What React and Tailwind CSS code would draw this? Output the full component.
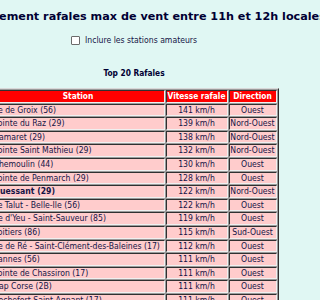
import React from "react";

const rows = [
  ["Île de Groix (56)", "141 km/h", "Ouest"],
  ["Pointe du Raz (29)", "139 km/h", "Nord-Ouest"],
  ["Camaret (29)", "138 km/h", "Nord-Ouest"],
  ["Pointe Saint Mathieu (29)", "132 km/h", "Nord-Ouest"],
  ["Chemoulin (44)", "130 km/h", "Ouest"],
  ["Pointe de Penmarch (29)", "128 km/h", "Ouest"],
  ["Ouessant (29)", "122 km/h", "Nord-Ouest", true],
  ["Le Talut - Belle-Ile (56)", "122 km/h", "Ouest"],
  ["Île d'Yeu - Saint-Sauveur (85)", "119 km/h", "Ouest"],
  ["Poitiers (86)", "115 km/h", "Sud-Ouest"],
  ["Île de Ré - Saint-Clément-des-Baleines (17)", "112 km/h", "Ouest"],
  ["Vannes (56)", "111 km/h", "Ouest"],
  ["Pointe de Chassiron (17)", "111 km/h", "Ouest"],
  ["Cap Corse (2B)", "111 km/h", "Ouest"],
  ["Rochefort Saint-Agnant (17)", "111 km/h", "Ouest"],
  ["Saint-Nazaire (44)", "108 km/h", "Ouest"],
  ["Belle-Ile (56)", "107 km/h", "Ouest"],
  ["Lorient (56)", "106 km/h", "Ouest"],
  ["Brest (29)", "105 km/h", "Nord-Ouest"],
  ["La Rochelle (17)", "104 km/h", "Ouest"],
];

const cond = { fontFamily: '"DejaVu Sans Condensed", "DejaVu Sans", Verdana, sans-serif' };
const wide = { fontFamily: '"DejaVu Sans", Verdana, sans-serif' };

const cell =
  "whitespace-nowrap border border-t-[#303030] border-l-[#303030] border-r-[#f0f0f0] border-b-[#f0f0f0] bg-[#ffcccc] py-0 leading-[10.6px]";
const head =
  "whitespace-nowrap border border-t-[#303030] border-l-[#303030] border-r-[#f0f0f0] border-b-[#f0f0f0] bg-[#ff0000] p-0 text-center text-[8.3px] font-bold leading-[10.6px] text-white";

export default function App() {
  return (
    <div className="min-h-[300px] w-full overflow-hidden bg-[#e0f7f3] text-[#141446]" style={cond}>
      <div className="flex w-[268px] flex-col items-center">
        <h1
          className="mt-[10px] whitespace-nowrap pl-[24px] text-[11.2px] font-bold leading-[13px] text-[#000033]"
          style={wide}
        >
          Classement rafales max de vent entre 11h et 12h locales
        </h1>
        <label className="mt-[13px] flex items-center gap-[5px] whitespace-nowrap text-[8.6px] leading-[9px]">
          <span className="inline-block h-[9px] w-[9px] rounded-[1px] border border-[#6b6b6b] bg-white" />
          <span>Inclure les stations amateurs</span>
        </label>
        <div className="mt-[24px] whitespace-nowrap text-[8.3px] font-bold leading-[9px] text-[#000033]">
          Top 20 Rafales
        </div>
        <table className="mt-[10px] w-[289px] shrink-0 table-fixed border-separate border-spacing-[1px] border border-t-[#d8d8d8] border-l-[#d8d8d8] border-r-[#303030] border-b-[#303030] bg-[#9a9a9a] text-[8.6px]">
          <thead>
            <tr>
              <th className={`w-[173px] ${head}`}>Station</th>
              <th className={`w-[62px] ${head}`}>Vitesse rafale</th>
              <th className={`w-[48px] ${head}`}>Direction</th>
            </tr>
          </thead>
          <tbody>
            {rows.map((r) => (
              <tr key={r[0]}>
                <td className={`${cell} px-[1px] text-left ${r[3] ? "font-bold" : "font-normal"}`}>{r[0]}</td>
                <td className={`${cell} px-0 text-center`}>{r[1]}</td>
                <td className={`${cell} px-0 text-center`}>{r[2]}</td>
              </tr>
            ))}
          </tbody>
        </table>
      </div>
    </div>
  );
}
